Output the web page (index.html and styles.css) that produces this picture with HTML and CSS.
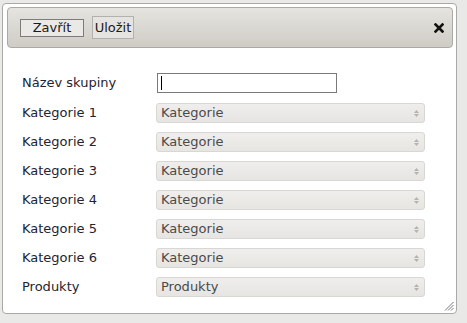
FILE: index.html
```html
<!DOCTYPE html>
<html lang="cs">
<head>
<meta charset="utf-8">
<title>Skupina</title>
<link rel="stylesheet" href="styles.css">
</head>
<body>
<div class="dialog">
  <div class="titlebar">
    <button class="btn btn-close-text" type="button">Zavřít</button>
    <button class="btn btn-save" type="button">Uložit</button>
    <span class="close-x" aria-label="close">
      <svg width="10" height="10" viewBox="0 0 10 10"><path d="M1.5 1.5 L8.5 8.5 M8.5 1.5 L1.5 8.5" stroke="#111" stroke-width="2.6" stroke-linecap="square"/></svg>
    </span>
  </div>
  <div class="content">
    <form class="form">
      <label class="lbl first">Název skupiny</label>
      <span class="input-wrap first"><input class="text" type="text"><span class="caret"></span></span>

      <label class="lbl">Kategorie 1</label>
      <span class="sel"><select><option>Kategorie</option></select><svg class="arr" width="5" height="7" viewBox="0 0 5 7"><path d="M2.5 0 L5 3 L0 3Z M0 4 L5 4 L2.5 7Z" fill="#b5b3b0"/></svg></span>

      <label class="lbl">Kategorie 2</label>
      <span class="sel"><select><option>Kategorie</option></select><svg class="arr" width="5" height="7" viewBox="0 0 5 7"><path d="M2.5 0 L5 3 L0 3Z M0 4 L5 4 L2.5 7Z" fill="#b5b3b0"/></svg></span>

      <label class="lbl">Kategorie 3</label>
      <span class="sel"><select><option>Kategorie</option></select><svg class="arr" width="5" height="7" viewBox="0 0 5 7"><path d="M2.5 0 L5 3 L0 3Z M0 4 L5 4 L2.5 7Z" fill="#b5b3b0"/></svg></span>

      <label class="lbl">Kategorie 4</label>
      <span class="sel"><select><option>Kategorie</option></select><svg class="arr" width="5" height="7" viewBox="0 0 5 7"><path d="M2.5 0 L5 3 L0 3Z M0 4 L5 4 L2.5 7Z" fill="#b5b3b0"/></svg></span>

      <label class="lbl">Kategorie 5</label>
      <span class="sel"><select><option>Kategorie</option></select><svg class="arr" width="5" height="7" viewBox="0 0 5 7"><path d="M2.5 0 L5 3 L0 3Z M0 4 L5 4 L2.5 7Z" fill="#b5b3b0"/></svg></span>

      <label class="lbl">Kategorie 6</label>
      <span class="sel"><select><option>Kategorie</option></select><svg class="arr" width="5" height="7" viewBox="0 0 5 7"><path d="M2.5 0 L5 3 L0 3Z M0 4 L5 4 L2.5 7Z" fill="#b5b3b0"/></svg></span>

      <label class="lbl">Produkty</label>
      <span class="sel"><select><option>Produkty</option></select><svg class="arr" width="5" height="7" viewBox="0 0 5 7"><path d="M2.5 0 L5 3 L0 3Z M0 4 L5 4 L2.5 7Z" fill="#b5b3b0"/></svg></span>
    </form>
  </div>
  <svg class="resize" width="10" height="10" viewBox="0 0 10 10"><path d="M9.5 1 L1 9.5 M9.5 4 L4 9.5 M9.5 7 L7 9.5" stroke="#777" stroke-width="1"/></svg>
</div>
</body>
</html>
```
FILE: styles.css
```css
html, body {
  margin: 0;
  padding: 0;
  background: #e9e9e7;
  font-family: "DejaVu Sans", Verdana, sans-serif;
  font-size: 13px;
  color: #1e2430;
}

.dialog {
  position: relative;
  box-sizing: border-box;
  margin: 3px 0 0 2px;
  width: 455px;
  height: 311px;
  background: #fff;
  border: 1px solid #aaa9a6;
  border-radius: 4px;
  padding: 3px 3px 0 4px;
}

.titlebar {
  box-sizing: border-box;
  height: 41px;
  border: 1px solid #aaa9a6;
  border-radius: 4px;
  background: linear-gradient(#e5e4e0, #cfccc5);
  display: flex;
  align-items: center;
  padding: 0 8px 0 12px;
}

.btn {
  font-family: "DejaVu Sans", Verdana, sans-serif;
  font-size: 13px;
  color: #1a1a1a;
  background: #ebe9e6;
  margin: 0;
  cursor: pointer;
}

.btn-close-text {
  width: 64px;
  height: 18px;
  padding: 0;
  border: 1px solid #7d7c79;
  line-height: 16px;
}

.btn-save {
  margin-left: 8px;
  width: 42px;
  height: 23px;
  padding: 0;
  border: 1px solid #b2b1ae;
  background: #e6e4e0;
  line-height: 21px;
}

.close-x {
  margin-left: auto;
  display: flex;
}

.content {
  padding: 26px 0 0 15px;
}

.form {
  margin: 0;
  display: grid;
  grid-template-columns: 134px 269px;
  grid-auto-rows: 20px;
  row-gap: 9px;
  align-items: center;
}

.lbl {
  color: #1e2430;
  line-height: 20px;
}

.lbl.first, .input-wrap.first {
  margin-bottom: 3px;
}

.input-wrap {
  position: relative;
  display: block;
  width: 180px;
  height: 20px;
  margin-left: 1px;
}

.text {
  box-sizing: border-box;
  width: 180px;
  height: 20px;
  margin: 0;
  border: 1px solid #7a7a78;
  padding: 0 4px;
  background: #fff;
  outline: none;
  font-family: "DejaVu Sans", Verdana, sans-serif;
  font-size: 13px;
}

.caret {
  position: absolute;
  left: 4px;
  top: 3px;
  width: 1px;
  height: 14px;
  background: #000;
}

.sel {
  position: relative;
  display: block;
  height: 20px;
}

.sel select {
  -webkit-appearance: none;
  appearance: none;
  box-sizing: border-box;
  width: 269px;
  height: 20px;
  margin: 0;
  padding: 0 0 0 4px;
  border: 1px solid #d9d7d3;
  border-radius: 3px;
  background: linear-gradient(#efeeec, #e7e5e2);
  color: #4a4a4a;
  font-family: "DejaVu Sans", Verdana, sans-serif;
  font-size: 13px;
  line-height: 18px;
  outline: none;
}

.arr {
  position: absolute;
  right: 6px;
  top: 7px;
}

.resize {
  position: absolute;
  right: 2px;
  bottom: 2px;
}
```
